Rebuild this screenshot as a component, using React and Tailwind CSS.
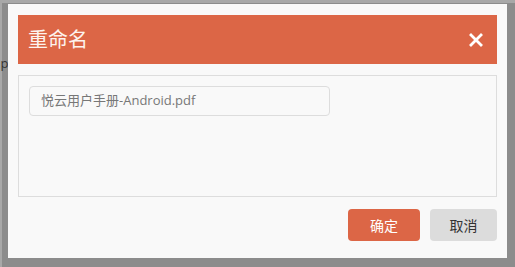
export default function App() {
  const font = { fontFamily: '"Open Sans", "Noto Sans CJK SC", sans-serif' };
  return (
    <div className="relative w-[515px] h-[267px] bg-[#8c8c8c] pt-[4px] pl-[8px] pr-[8px] pb-[9px] overflow-hidden" style={font}>
      <div className="absolute left-0 top-0 w-[515px] h-[3px] bg-[#a8a8a8]" />
      <div className="absolute left-0 top-0 w-[2px] h-[267px] bg-[#a8a8a8]" />
      <span className="absolute left-[-3px] top-[54px] text-[13px] text-[#333]">.p</span>
      <div className="relative w-[499px] h-[254px] bg-[#f9f9f9] pt-[11px] px-[10px] flex flex-col">
        <div className="h-[49px] bg-[#dc6646] flex items-center justify-between pl-[10px] pr-[14px]">
          <span className="text-[20px] text-[#fdf3ee]">重命名</span>
          <svg width="14" height="14" viewBox="0 0 14 14">
            <path d="M2 2 L12 12 M12 2 L2 12" stroke="#fff" strokeWidth="2.8" strokeLinecap="square" />
          </svg>
        </div>
        <div className="mt-[11px] h-[122px] border border-[#dddddd] p-[10px]">
          <div className="w-[301px] h-[30px] border border-[#dddddd] rounded-[4px] bg-[#f9f9f9] flex items-center pl-[11px] text-[13px] text-[#777]">
            悦云用户手册-Android.pdf
          </div>
        </div>
        <div className="mt-[12px] flex justify-end gap-[10px]">
          <button className="w-[72px] h-[32px] rounded-[4px] bg-[#dc6646] text-[14px] text-white">确定</button>
          <button className="w-[67px] h-[32px] rounded-[4px] bg-[#dcdcdc] text-[14px] text-[#333]">取消</button>
        </div>
      </div>
    </div>
  );
}
